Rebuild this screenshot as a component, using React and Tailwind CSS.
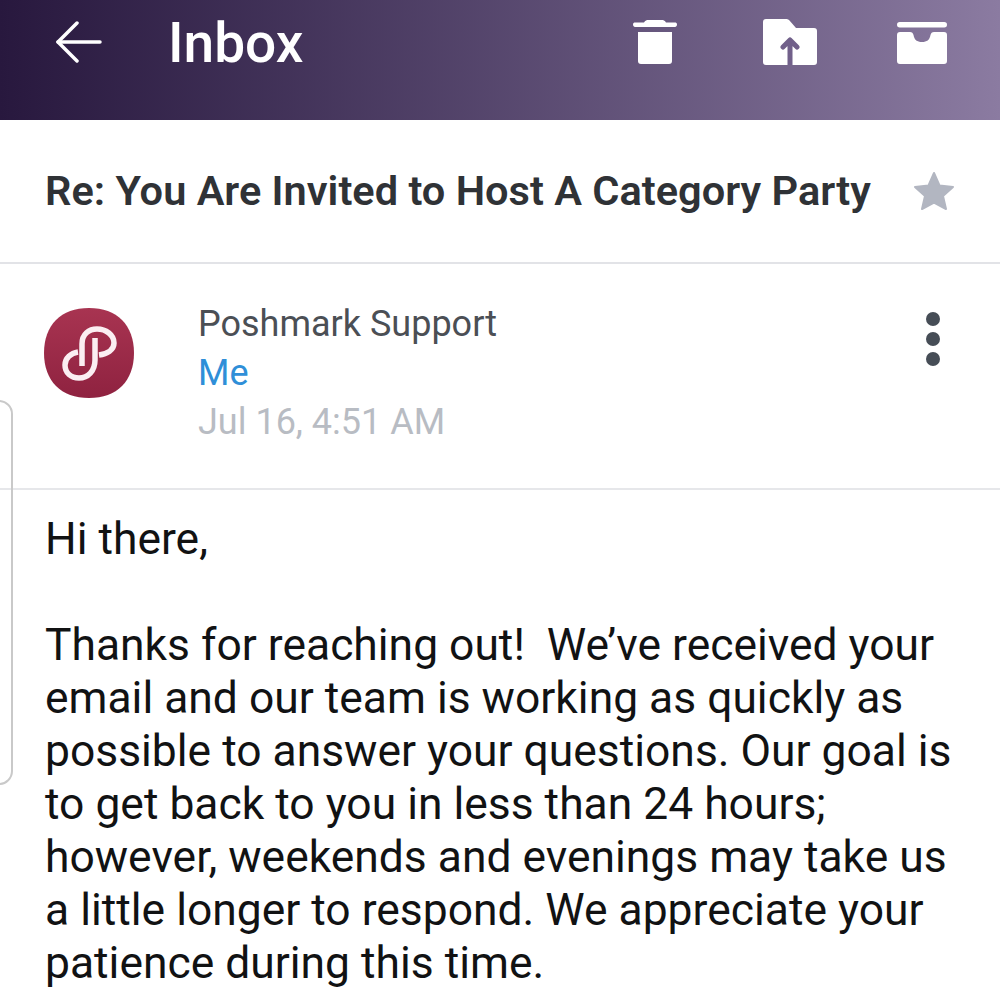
import React from 'react';

const bodyLines = [
  'Thanks for reaching out!\u00a0 We’ve received your',
  'email and our team is working as quickly as',
  'possible to answer your questions. Our goal is',
  'to get back to you in less than 24 hours;',
  'however, weekends and evenings may take us',
  'a little longer to respond. We appreciate your',
  'patience during this time.',
];

function BackIcon() {
  return (
    <svg width="48" height="44" viewBox="0 0 48 44" fill="none" stroke="white" strokeWidth="3.5" strokeLinecap="round" strokeLinejoin="round">
      <path d="M3 21H45" />
      <path d="M22 2L3 21L22 40" />
    </svg>
  );
}

function TrashIcon() {
  return (
    <svg width="46" height="46" viewBox="0 0 46 46" fill="white">
      <path d="M1 5.500C1 4 2 3.500 3 3.500H12C13 1.500 15 1 16 1H30C31 1 33 1.500 34 3.500H43C44 3.500 45 4 45 5.500C45 7 44 8 43 8H3C2 8 1 7 1 5.500Z" />
      <path d="M6 13H40V42C40 44 39 45 37 45H9C7 45 6 44 6 42Z" />
    </svg>
  );
}

function FolderUpIcon() {
  return (
    <svg width="54" height="46" viewBox="0 0 54 46" fill="white">
      <path d="M0 3C0 1 1 0 3 0H23C24.500 0 25.500 .5 26.500 1.500L33 9H51C53 9 54 10 54 12V43C54 45 53 46 51 46H3C1 46 0 45 0 43Z" />
      <path d="M27 21L20 28M27 21L34 28M27 22V46" stroke="#71608a" strokeWidth="5" strokeLinecap="round" fill="none" />
    </svg>
  );
}

function ArchiveIcon() {
  return (
    <svg width="52" height="46" viewBox="0 0 52 46" fill="white">
      <rect x="1" y="3" width="50" height="5.500" rx="2.750" />
      <path d="M1 16C1 14 2 13 4 13H14C16 13 17 14 17.500 16C18.500 21 21 23 26 23C31 23 33.500 21 34.500 16C35 14 36 13 38 13H48C50 13 51 14 51 16V42C51 44 50 45 48 45H4C2 45 1 44 1 42Z" />
    </svg>
  );
}

function PoshmarkLogo() {
  return (
    <svg width="90" height="90" viewBox="0 0 90 90">
      <defs>
        <linearGradient id="poshBg" x1="0" y1="0" x2="0" y2="1">
          <stop offset="0" stopColor="#a83451" />
          <stop offset="1" stopColor="#8f2240" />
        </linearGradient>
      </defs>
      <path d="M45 0C73 0 90 17 90 45C90 73 73 90 45 90C17 90 0 73 0 45C0 17 17 0 45 0Z" fill="url(#poshBg)" />
      <path
        d="M38 58V36C38 26 45 21 53 21C62 21 70 27 70 35C70 42 63 46 55 47"
        fill="none"
        stroke="#fbeef2"
        strokeWidth="5.500"
      />
      <path
        d="M51 30V52C51 63 44 70 35 70C27 70 21 65 21 57C21 50 27 45 34 44"
        fill="none"
        stroke="#fbeef2"
        strokeWidth="5.500"
      />
    </svg>
  );
}

export default function App() {
  return (
    <div className="relative w-[1000px] h-[998px] overflow-hidden bg-white font-['Roboto',sans-serif]">
      <header className="h-[120px] flex items-center bg-gradient-to-r from-[#28183e] to-[#8b7ba1] text-white">
        <div className="flex items-center w-full pb-[34px] pl-[55px]">
          <BackIcon />
          <span className="ml-[65px] text-[55px] leading-none font-medium">Inbox</span>
          <div className="ml-auto flex items-center mb-[2px]">
            <TrashIcon />
            <div className="ml-[85px]"><FolderUpIcon /></div>
            <div className="ml-[79px] mr-[52px]"><ArchiveIcon /></div>
          </div>
        </div>
      </header>

      <div className="h-[144px] flex items-center justify-between pl-[45px] pr-[45px] border-b-2 border-[#e2e3e7]">
        <h1 className="text-[41.550px] font-semibold text-[#2f3236] whitespace-nowrap">Re: You Are Invited to Host A Category Party</h1>
        <svg width="42" height="40" viewBox="0 0 42 40" fill="#b2b6c1" stroke="#b2b6c1" strokeWidth="2" strokeLinejoin="round">
          <path d="M21 2L26.500 14.500L40 16L30 25L33 38L21 31.500L9 38L12 25L2 16L15.500 14.500Z" />
        </svg>
      </div>

      <div className="h-[226px] flex items-start pl-[44px] pr-[60px] pt-[44px] border-b-2 border-[#e6e7ea]">
        <PoshmarkLogo />
        <div className="ml-[64px] -mt-[8px] text-[36px] leading-[49px]">
          <div className="text-[#4b4f55]">Poshmark Support</div>
          <div className="text-[#2f8fd8]">Me</div>
          <div className="text-[#b8bcc3]">Jul 16, 4:51 AM</div>
        </div>
        <div className="ml-auto flex flex-col gap-[6px] pt-[4px]">
          <span className="w-[14px] h-[14px] rounded-full bg-[#464d56]" />
          <span className="w-[14px] h-[14px] rounded-full bg-[#464d56]" />
          <span className="w-[14px] h-[14px] rounded-full bg-[#464d56]" />
        </div>
      </div>

      <div className="pl-[45px] pt-[23px] text-[44.400px] leading-[53px] text-[#111213] whitespace-nowrap">
        <p className="mb-[53px]">Hi there,</p>
        {bodyLines.map((line, i) => (
          <p key={i}>{line}</p>
        ))}
      </div>

      <div className="absolute left-[-20px] top-[400px] w-[33px] h-[385px] rounded-r-[14px] border-2 border-[#c9c9c9] bg-transparent" />
    </div>
  );
}
